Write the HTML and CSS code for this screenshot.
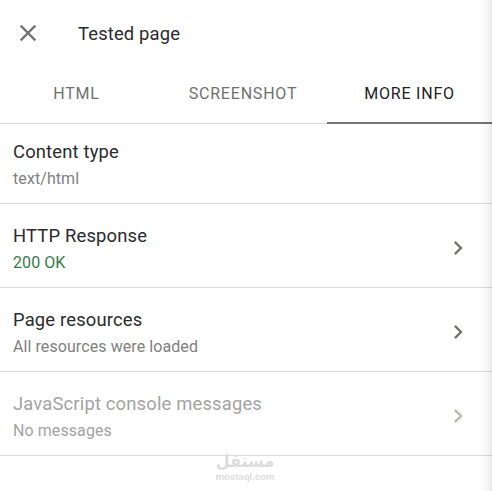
FILE: index.html
```html
<!DOCTYPE html>
<html lang="en">
<head>
	<meta charset="UTF-8">
	<title>Tested page</title>
	<link rel="stylesheet" href="styles.css">
</head>
<body>
	<div class="panel">
		<div class="header">
			<svg class="close" viewBox="0 0 24 24"><path d="M19 6.41L17.59 5 12 10.59 6.41 5 5 6.41 10.59 12 5 17.59 6.41 19 12 13.41 17.59 19 19 17.59 13.41 12z"/></svg>
			<div class="header_title">Tested page</div>
		</div>
		<div class="tabs">
			<div class="tab tab_html">HTML</div>
			<div class="tab tab_shot">SCREENSHOT</div>
			<div class="tab tab_info active">MORE INFO</div>
		</div>
		<div class="row first">
			<div class="text">
				<div class="title">Content type</div>
				<div class="sub">text/html</div>
			</div>
		</div>
		<div class="row">
			<div class="text">
				<div class="title">HTTP Response</div>
				<div class="sub ok">200 OK</div>
			</div>
			<svg class="arrow" viewBox="0 0 24 24"><path d="M10 6L8.59 7.41 13.17 12l-4.58 4.59L10 18l6-6z"/></svg>
		</div>
		<div class="row">
			<div class="text">
				<div class="title">Page resources</div>
				<div class="sub">All resources were loaded</div>
			</div>
			<svg class="arrow" viewBox="0 0 24 24"><path d="M10 6L8.59 7.41 13.17 12l-4.58 4.59L10 18l6-6z"/></svg>
		</div>
		<div class="row disabled">
			<div class="text">
				<div class="title">JavaScript console messages</div>
				<div class="sub">No messages</div>
			</div>
			<svg class="arrow" viewBox="0 0 24 24"><path d="M10 6L8.59 7.41 13.17 12l-4.58 4.59L10 18l6-6z"/></svg>
		</div>
		<div class="edge"></div>
		<div class="watermark">
			<div class="mark_ar" lang="ar">مستقل</div>
			<div class="mark_en">mostaql.com</div>
		</div>
	</div>
</body>
</html>
```
FILE: styles.css
```css
body {
	margin: 0;
	background: #fff;
	font-family: Roboto, "Liberation Sans", sans-serif;
	color: #2a2b2e;
}
.panel {
	position: relative;
	height: 491px;
	overflow: hidden;
}
.header {
	display: flex;
	align-items: center;
	height: 66px;
	padding-left: 14px;
}
.close {
	width: 28px;
	height: 28px;
	fill: #757575;
}
.header_title {
	margin-left: 36px;
	font-size: 18.4px;
	letter-spacing: 0.15px;
}
.tabs {
	display: flex;
	height: 57px;
	border-bottom: 1px solid #dadada;
}
.tab {
	display: flex;
	align-items: center;
	justify-content: center;
	box-sizing: border-box;
	height: 58px;
	padding-bottom: 3px;
	font-size: 16px;
	letter-spacing: 0.8px;
	color: #707070;
}
.tab_html {
	width: 153px;
}
.tab_shot {
	width: 174px;
	padding-left: 6px;
}
.tab_info {
	width: 165px;
}
.active {
	padding-bottom: 1px;
	border-bottom: 2px solid #757575;
	color: #202124;
}
.row {
	display: flex;
	align-items: center;
	justify-content: space-between;
	box-sizing: border-box;
	height: 84px;
	padding: 5px 20px 0 13px;
	border-bottom: 1px solid #dadada;
}
.first {
	height: 80px;
	padding-top: 0;
}
.text {
	padding-top: 2px;
}
.title {
	font-size: 18.4px;
	line-height: 28px;
	letter-spacing: 0.17px;
}
.sub {
	font-size: 16px;
	line-height: 26px;
	letter-spacing: 0.08px;
	color: #808080;
}
.ok {
	color: #2f7d46;
}
.arrow {
	width: 28px;
	height: 28px;
	fill: #757570;
}
.disabled .title, .disabled .sub {
	color: #a3a3a3;
}
.disabled .arrow {
	fill: #b8b8b4;
}
.edge {
	position: absolute;
	top: 0;
	right: 0;
	width: 12px;
	height: 491px;
	background: linear-gradient(to right, rgba(0,0,0,0), rgba(0,0,0,0.03) 60%, rgba(0,0,0,0.09));
}
.watermark {
	position: absolute;
	top: 451px;
	left: 205px;
	width: 80px;
	text-align: center;
	color: #dcdcdc;
}
.mark_ar {
	height: 20px;
	font: bold 16px/20px "DejaVu Sans", sans-serif;
	transform: scaleY(1.1);
}
.mark_en {
	font: bold 9.6px/11px "Liberation Sans", sans-serif;
}
```
